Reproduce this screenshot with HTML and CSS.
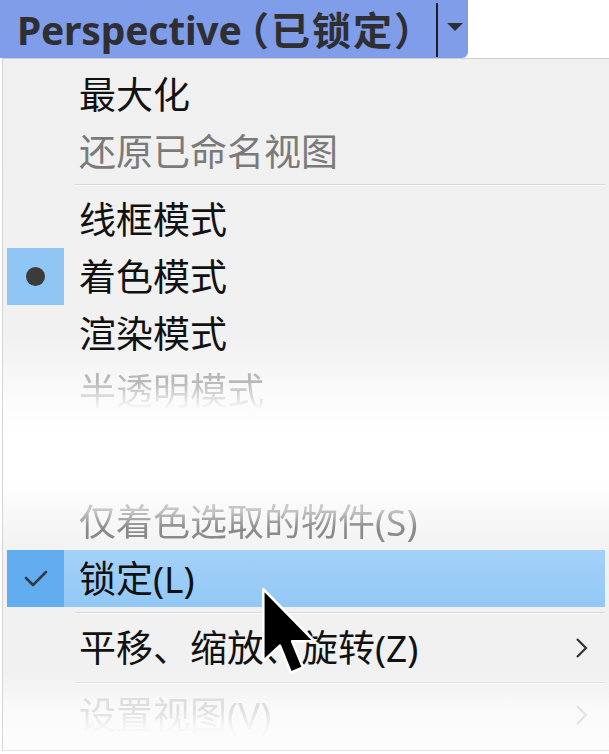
FILE: index.html
```html
<!DOCTYPE html>
<html lang="zh-CN">
<head>
<meta charset="utf-8">
<title>Perspective 菜单</title>
<link rel="stylesheet" href="styles.css">
</head>
<body>
<div class="page">
  <div class="tab">
    <span class="tab-title">Perspective<span class="tab-cjk">（已锁定）</span></span>
    <span class="tab-divider"></span>
    <span class="tab-caret"></span>
  </div>
  <div class="menu">
    <div class="item"><span class="gutter"></span><span class="label">最大化</span></div>
    <div class="item"><span class="gutter"></span><span class="label disabled">还原已命名视图</span></div>
    <div class="sep sep-a"></div>
    <div class="item"><span class="gutter"></span><span class="label">线框模式</span></div>
    <div class="item"><span class="gutter checked"><span class="bullet"></span></span><span class="label">着色模式</span></div>
    <div class="item"><span class="gutter"></span><span class="label">渲染模式</span></div>
    <div class="item"><span class="gutter"></span><span class="label fade-down">半透明模式</span></div>
    <div class="spacer"></div>
    <div class="item"><span class="gutter"></span><span class="label fade-up">仅着色选取的物件(S)</span></div>
    <div class="item hover"><span class="gutter checked-hover">
      <svg class="check" width="24" height="18" viewBox="0 0 24 18"><polyline points="2,8 9,15 22,2" fill="none" stroke="#2f3a44" stroke-width="2.6" stroke-linecap="round" stroke-linejoin="round"/></svg>
    </span><span class="label">锁定(L)</span></div>
    <div class="sep sep-b"></div>
    <div class="item"><span class="gutter"></span><span class="label">平移、缩放、旋转(Z)</span>
      <svg class="chev" width="14" height="22" viewBox="0 0 14 22"><polyline points="2,2 11,11 2,20" fill="none" stroke="#333" stroke-width="2.2"/></svg>
    </div>
    <div class="sep sep-c"></div>
    <div class="item"><span class="gutter"></span><span class="label ghost">设置视图(V)</span>
      <svg class="chev" width="14" height="22" viewBox="0 0 14 22"><polyline points="2,2 11,11 2,20" fill="none" stroke="#e2e2e2" stroke-width="2.2"/></svg>
    </div>
  </div>
  <svg class="cursor" width="57" height="94" viewBox="0 0 13 21.5">
    <path d="M0.5 0.5 L0.5 17 L4.3 13.4 L6.8 19.6 L9.6 18.4 L7.1 12.4 L12.2 12.4 Z" fill="#000" stroke="#fff" stroke-width="0.6" stroke-linejoin="round"/>
  </svg>
</div>
</body>
</html>
```

FILE: styles.css
```css
html, body {
  margin: 0;
  padding: 0;
  background: #ffffff;
  overflow: hidden;
}

.page {
  position: relative;
  width: 609px;
  height: 754px;
  font-family: "Noto Sans", "Noto Sans CJK SC", sans-serif;
}

.tab {
  display: flex;
  align-items: center;
  width: 468px;
  height: 58px;
  background: #7f9de9;
  border-bottom-right-radius: 6px;
}

.tab-title {
  width: 436px;
  box-sizing: border-box;
  padding-left: 17px;
  margin-top: -3px;
  font-family: "Noto Sans", "Noto Sans CJK SC", sans-serif;
  font-weight: 700;
  font-size: 39px;
  color: #2e2e33;
  white-space: nowrap;
  letter-spacing: -0.2px;
}

.tab-cjk {
  font-family: "Noto Sans CJK SC", sans-serif;
  font-feature-settings: "halt";
  margin-left: 8px;
  letter-spacing: 2px;
}

.tab-divider {
  width: 1.5px;
  height: 54px;
  background: #1e1e24;
  align-self: flex-end;
  margin-bottom: 1px;
}

.tab-caret {
  margin-left: 9px;
  width: 0;
  height: 0;
  border-left: 8px solid transparent;
  border-right: 8px solid transparent;
  border-top: 8px solid #2e2e33;
  margin-top: -4px;
}

.menu {
  margin-left: 2px;
  width: 606px;
  border-top: 1px solid #cfcfcf;
  border-left: 1px solid #d6d6d6;
  border-bottom: 1px solid #e4e4e4;
  padding-top: 7px;
  padding-bottom: 7px;
  background: linear-gradient(180deg,
    #f0f0f0 0px,
    #f1f1f1 280px,
    #fbfbfb 340px,
    #ffffff 380px,
    #ffffff 420px,
    #f6f6f6 470px,
    #f1f1f1 500px,
    #f1f1f1 615px,
    #fafafa 650px,
    #fdfdfd 693px);
}

.item {
  display: flex;
  align-items: center;
  height: 57px;
  margin: 0 4px;
}

.gutter {
  flex: none;
  width: 57px;
  height: 57px;
  display: flex;
  align-items: center;
  justify-content: center;
}

.gutter.checked {
  background: #90c6f4;
}

.bullet {
  width: 19px;
  height: 19px;
  border-radius: 50%;
  background: #3b3b3b;
}

.label {
  flex: 1;
  padding-left: 15px;
  font-size: 37px;
  font-weight: 400;
  line-height: 57px;
  color: #111111;
  white-space: nowrap;
}

.label.disabled {
  color: #7a7a7a;
}

.label.fade-down {
  background: linear-gradient(180deg, #b8b8b8 35%, #f4f4f4 78%);
  -webkit-background-clip: text;
  background-clip: text;
  color: transparent;
}

.label.fade-up {
  background: linear-gradient(180deg, #c6c6c6 30%, #8a8a8a 62%);
  -webkit-background-clip: text;
  background-clip: text;
  color: transparent;
}

.label.ghost {
  background: linear-gradient(180deg, #dedede 40%, #f7f7f7 75%);
  -webkit-background-clip: text;
  background-clip: text;
  color: transparent;
}

.item.hover {
  background: linear-gradient(180deg, #a3d1f8 0%, #93c8f6 100%);
}

.gutter.checked-hover {
  background: #62acf0;
}

.check {
  display: block;
}

.chev {
  flex: none;
  margin-right: 16px;
}

.sep {
  box-sizing: border-box;
  margin: 0 4px 0 72px;
}

.sep::after {
  content: "";
  display: block;
  height: 1px;
  background: #d7d7d7;
  box-shadow: 0 1px 0 #fbfbfb;
}

.sep-a {
  height: 11px;
  padding-top: 4px;
}

.sep-b {
  height: 12px;
  padding-top: 5px;
}

.sep-c {
  height: 10px;
  padding-top: 6px;
}

.sep-c::after {
  background: #e2e2e2;
}

.spacer {
  height: 74px;
}

.cursor {
  position: absolute;
  left: 261px;
  top: 587px;
}
```
